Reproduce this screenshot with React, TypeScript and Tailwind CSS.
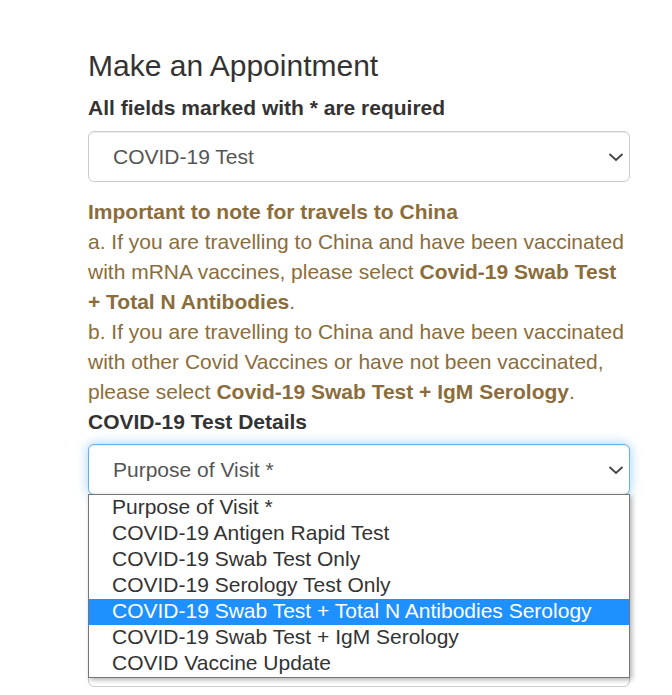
const purposeOptions = [
  "Purpose of Visit *",
  "COVID-19 Antigen Rapid Test",
  "COVID-19 Swab Test Only",
  "COVID-19 Serology Test Only",
  "COVID-19 Swab Test + Total N Antibodies Serology",
  "COVID-19 Swab Test + IgM Serology",
  "COVID Vaccine Update",
];

const Chevron = () => (
  <svg width="16" height="10" viewBox="0 0 16 10" className="absolute right-[5px] top-1/2 -translate-y-1/2">
    <polyline points="1.5,2 8,8 14.5,2" fill="none" stroke="#444" strokeWidth="1.8" />
  </svg>
);

interface SelectBoxProps {
  value: string;
  focused?: boolean;
  className?: string;
}

const SelectBox = ({ value, focused = false, className = "" }: SelectBoxProps) => (
  <div
    className={`relative h-[51px] w-full rounded-[6px] border bg-white pl-[24px] flex items-center text-[21px] text-[#555] ${
      focused
        ? "border-[#66afe9] shadow-[inset_0_1px_1px_rgba(0,0,0,0.075),0_0_12px_rgba(102,175,233,0.6)]"
        : "border-[#ccc] shadow-[inset_0_1px_1px_rgba(0,0,0,0.075)]"
    } ${className}`}
  >
    {value}
    <Chevron />
  </div>
);

export default function App() {
  const selected = 4;

  return (
    <div className="min-h-[695px] bg-white font-['Liberation_Sans',Arial,sans-serif] text-[#333]">
      <div className="pl-[88px] pr-[42px] pt-[49px] pb-[8px]">
        <h3 className="text-[30px] leading-[33px] font-normal">Make an Appointment</h3>
        <p className="mt-[11px] text-[21px] leading-[30px] font-bold">All fields marked with * are required</p>

        <SelectBox value="COVID-19 Test" className="mt-[8px]" />

        {/* Travel notice */}
        <div className="mt-[15px] text-[21px] leading-[30px] text-[#8a6d3b]">
          <p className="font-bold">Important to note for travels to China</p>
          <p>
            a. If you are travelling to China and have been vaccinated with mRNA vaccines, please select{" "}
            <b>Covid-19 Swab Test + Total N Antibodies</b>.
          </p>
          <p>
            b. If you are travelling to China and have been vaccinated with other Covid Vaccines or have not been
            vaccinated, please select <b>Covid-19 Swab Test + IgM Serology</b>.
          </p>
        </div>
        <p className="text-[21px] leading-[30px] font-bold">COVID-19 Test Details</p>

        <div className="relative mt-[7px]">
          <SelectBox value="Purpose of Visit *" focused />
          {/* open option list */}
          <ul className="absolute left-0 right-0 top-[50px] z-10 border border-[#767676] bg-white shadow-[2px_2px_5px_rgba(0,0,0,0.3)]">
            {purposeOptions.map((opt, i) => (
              <li
                key={opt}
                className={`h-[26px] pl-[23px] text-[21px] leading-[24px] whitespace-nowrap ${
                  i === selected ? "bg-[#1e90ff] text-white" : "text-[#333]"
                }`}
              >
                {opt}
              </li>
            ))}
          </ul>
        </div>

        <div className="mt-[141px] h-[51px] rounded-[6px] border border-[#ccc] bg-white" />
      </div>
    </div>
  );
}
